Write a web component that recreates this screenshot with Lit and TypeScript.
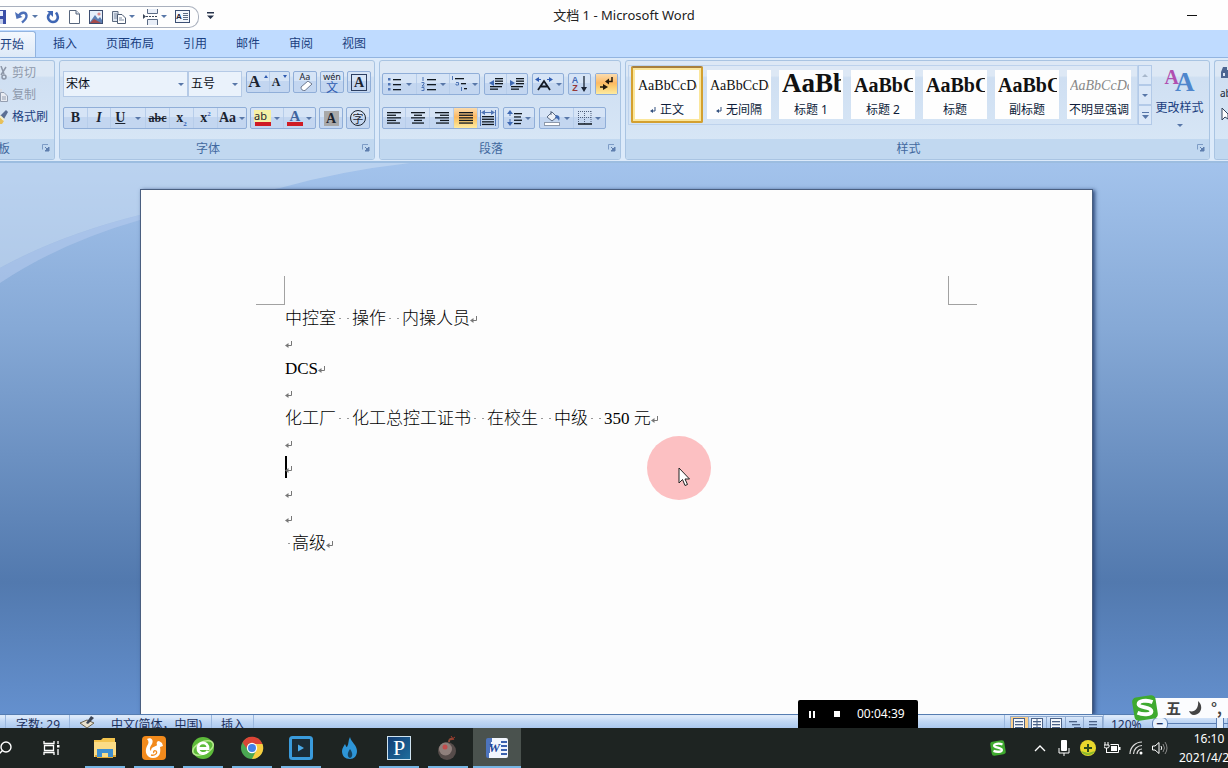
import { LitElement, html, css, svg, TemplateResult } from "lit";
import { customElement } from "lit/decorators.js";
import { classMap } from "lit/directives/class-map.js";

const pic = (w: number, h: number, body: unknown) =>
  html`<svg width=${w} height=${h} viewBox="0 0 ${w} ${h}" aria-hidden="true">${body}</svg>`;

const arrow = (c = "#5877a8") => pic(6, 3, svg`<path d="M0 0H6L3 3Z" fill=${c}/>`);

const rows = (list: number[][], c = "#101820") =>
  list.map(([x, y, w]) => svg`<rect x=${x} y=${y} width=${w} height="1.3" fill=${c}/>`);

const launcher = pic(8, 8, svg`<path d="M.5 5.500V.5H6" fill="none" stroke="#7d9cc6"/><path d="M3 3L6 6M7 3V7H3Z" stroke="#5f7fae" fill="#5f7fae"/>`);

const logoS = (s: number) => html`<svg width=${s} height=${s} viewBox="0 0 28 28" aria-hidden="true">
  <rect x="3" y="3" width="22" height="22" rx="4" fill="#3faa2f" transform="rotate(-9 14 14)"/>
  <path d="M21 8.500C15 6 8 7.500 8 10.500C8 14 20 13 20 17C20 20.500 12 20.500 7 18.500" fill="none" stroke="#fff" stroke-width="3.600"/></svg>`;

const icons: Record<string, TemplateResult> = {
  save: pic(7, 14, svg`<path d="M-7 0H6V14H-7Z" fill="#3a4fa8"/><path d="M-5 1H3V6H-5Z" fill="#e8eefc"/><path d="M-4 9H3V14H-4Z" fill="#c3cdea"/>`),
  undo: pic(14, 14, svg`<path d="M3.500 6C6 2 11 1.500 11.500 5.500C11.800 8 9.500 10.500 7 12.500" fill="none" stroke="#4c6fb8" stroke-width="2.400"/><path d="M0 2L1.500 9L7.500 7Z" fill="#4c6fb8"/>`),
  redo: pic(14, 14, svg`<path d="M4 3.500C0 7 3 12 7 12C11.500 12 13.500 7 10 2.500" fill="none" stroke="#3f66b4" stroke-width="2.600"/><path d="M1 1H7V7Z" fill="#3f66b4"/>`),
  page: pic(13, 14, svg`<path d="M1.500.5H8L11.500 4V13.500H1.500Z" fill="#fff" stroke="#56657c"/><path d="M8 .5V4H11.500" fill="#dde4ee" stroke="#56657c"/>`),
  picture: pic(15, 14, svg`<rect x=".5" y=".5" width="13" height="13" fill="#e6effa" stroke="#3c4d70"/><path d="M1 12L6 5L9 9L11 7L13 10V13H1Z" fill="#5d7fb4"/><path d="M1 13L5 9L12 13Z" fill="#a54a4a"/><circle cx="10" cy="4" r="1.600" fill="#d88"/>`),
  paste: pic(14, 14, svg`<path d="M.5 1.500H6V11.500H.5Z" fill="#dfe6f0" stroke="#5d6b80"/><path d="M2 4H5M2 6H5M2 8H5" stroke="#7c8aa0"/><path d="M5.500 4.500H10L13.500 8V13.500H5.500Z" fill="#fff" stroke="#4c5b72"/><path d="M7 8H10M7 10H12" stroke="#7c8aa0"/>`),
  breaks: pic(15, 16, svg`<path d="M4.500 0V4.500H14.500V0M4.500 16V10.500H14.500V16" fill="#e8eef8" stroke="#5b6b84"/><path d="M3 7.500H15" stroke="#3a4658" stroke-dasharray="2 1"/><path d="M0 5L3 7.500L0 10Z" fill="#3a4658"/>`),
  textbox: html`<span class="tb"><b>A</b><i></i></span>`,
  more: pic(7, 7, svg`<path d="M0 0H7V1.500H0ZM0 3.500H7L3.500 7Z" fill="#28344c"/>`),
  cut: pic(8, 14, svg`<path d="M1 0L4 8M6 1L1 9" stroke="#8d97a8" stroke-width="1.500"/><circle cx="4" cy="11" r="2" fill="none" stroke="#8d97a8" stroke-width="1.500"/>`),
  copy: pic(8, 14, svg`<path d="M0 1H2V10H0Z" fill="#d6dbe4"/><path d="M.5 4.500H4L7.500 8V13.500H.5Z" fill="#e9ecf2" stroke="#949eb0"/><path d="M2 9H6M2 11H6" stroke="#949eb0"/>`),
  brush: pic(8, 14, svg`<path d="M0 7L4 11L2 14H0Z" fill="#e8c15a"/><path d="M6 0L8 2L4 9L0 6Z" fill="#5b6f94"/><path d="M0 6L4 10" stroke="#f6efc8" stroke-width="2"/>`),
  eraser: html`<span class="stack"><span class="tiny">Aa</span>${pic(16, 10, svg`<path d="M4 6L11 0L15 3L8 9.500Q4 10 4 6Z" fill="#fff" stroke="#6e7a90"/>`)}</span>`,
  bullets: pic(16, 14, [svg`<path d="M1 1h2.500v2.500H1zM1 6h2.500v2.500H1zM1 11h2.500v2.500H1z" fill="#4f74b4"/>`, rows([[6, 2, 8], [6, 7, 8], [6, 12, 8]])]),
  numbers: pic(16, 14, [svg`<path d="M2 0V4M.5 5.500H3V7L1 9H3.500M.5 10.500H3V13.500H.5" stroke="#4f74b4" fill="none"/>`, rows([[6, 2, 9], [6, 7, 9], [6, 12, 9]])]),
  multi: pic(18, 16, [svg`<path d="M1.500 0V4M5 6.500H7.500V9H5V7.800M10.500 11V15" stroke="#4f74b4" fill="none"/>`, rows([[4, 2, 9], [10, 7, 5], [13, 12, 3]])]),
  outdent: pic(16, 12, [rows([[7, 0, 8], [7, 2.5, 8], [7, 5, 8], [2, 8, 12], [2, 10.5, 8]]), svg`<path d="M6 2V8L1 5Z" fill="#3e68b2"/>`]),
  indent: pic(16, 12, [rows([[7, 0, 8], [7, 2.5, 8], [7, 5, 8], [2, 8, 12], [2, 10.5, 8]]), svg`<path d="M1 2V8L6 5Z" fill="#3e68b2"/>`]),
  asian: pic(18, 14, svg`<path d="M3 13L9 4L15 13M6 9.500H12" stroke="#141a24" stroke-width="1.800" fill="none"/><path d="M0 2.500L4 0V5ZM18 2.500L14 0V5Z" fill="#2f5bb0"/><path d="M4 2.500H6M12 2.500H14" stroke="#2f5bb0"/>`),
  sort: html`<span class="az"><span class="azt"><b class="blue">A</b><b class="red">Z</b></span>${pic(6, 16, svg`<path d="M3 0V13" stroke="#1a2434" stroke-width="1.300"/><path d="M0 11H6L3 16Z" fill="#1a2434"/>`)}</span>`,
  marks: pic(16, 14, svg`<path d="M13 0V4.500H9" fill="none" stroke="#23180c" stroke-width="1.500"/><path d="M10 1.500V7.500L6 4.500Z" fill="#23180c"/><path d="M1 10H5" stroke="#23180c" stroke-width="1.500"/><path d="M4 7V13L9 10Z" fill="#23180c"/>`),
  left: pic(14, 12, rows([[0, 0, 14], [0, 2.6, 9], [0, 5.2, 14], [0, 7.8, 9], [0, 10.4, 13]])),
  center: pic(14, 12, rows([[0, 0, 14], [3, 2.6, 8], [0, 5.2, 14], [3, 7.8, 8], [1, 10.4, 12]])),
  right: pic(14, 12, rows([[0, 0, 14], [5, 2.6, 9], [0, 5.2, 14], [5, 7.8, 9], [1, 10.4, 13]])),
  justify: pic(14, 12, rows([[0, 0, 14], [0, 2.6, 14], [0, 5.2, 14], [0, 7.8, 14], [0, 10.4, 14]])),
  spread: pic(16, 16, [svg`<path d="M.5 0V16M15.500 0V16M3 2.500H13" stroke="#4f74b4"/><path d="M1 2.500L5 0V5ZM15 2.500L11 0V5Z" fill="#4f74b4"/>`, rows([[2, 6, 12], [2, 8.6, 12], [2, 11.2, 12], [2, 13.8, 12]])]),
  spacing: pic(15, 16, [svg`<path d="M3 2V14" stroke="#3e68b2" stroke-dasharray="4 3"/><path d="M0 4L3 0L6 4ZM0 12L3 16L6 12Z" fill="#3e68b2"/>`, rows([[7, 3, 8], [7, 6.3, 7], [7, 9.6, 8], [7, 12.9, 7]])]),
  bucket: pic(17, 16, svg`<path d="M3 7L8 2L13 7L8 11Z" fill="#eef2f8" stroke="#5b6b84"/><path d="M7 5V1" stroke="#5b6b84"/><path d="M12 5Q17 5 15 11Q14 8 11 8Z" fill="#4069b0"/><rect x=".5" y="12.500" width="15" height="3" fill="#fff" stroke="#8d99ab"/>`),
  borders: pic(14, 14, svg`<path d="M.5 0V13M6.500 0V13M13 0V13M0 .5H14M0 6.500H14" stroke="#50607c" stroke-dasharray="1 1"/><path d="M0 13H14" stroke="#101820" stroke-width="1.500"/>`),
  find: pic(8, 13, svg`<path d="M3 1H7V4H8V12H1V6Z" fill="#4d6692"/><path d="M3 7H5V10H3Z" fill="#dfe8f6"/>`),
  select: pic(8, 14, svg`<path d="M2 1V13L5 10L8 12V7Z" fill="#fff" stroke="#33435c"/>`),
};

const mark = html`<svg class="mark" width="8" height="8" viewBox="0 0 8 8" aria-hidden="true"><path d="M6.500 0V4.500H2" fill="none" stroke="#777"/><path d="M3.500 2V7L0 4.500Z" fill="#777"/></svg>`;
const gap = html`<span class="sp"><i></i><i></i></span>`;

interface Btn { name: string; icon: unknown; w: number; drop?: boolean; on?: boolean }

@customElement("tool-group")
export class ToolGroup extends LitElement {
  static properties = { items: { attribute: false } };
  declare items: Btn[];
  constructor() { super(); this.items = []; }
  static styles = css`
    :host { display: flex; flex: none; height: 22px; box-sizing: border-box; border: 1px solid #90aed8; border-radius: 2px;
      background: linear-gradient(#d6e4f6 0 45%, #c3d6f0 45% 100%); }
    button { display: flex; align-items: center; justify-content: center; gap: 3px; padding: 0; margin: 0; border: 0; box-sizing: border-box;
      background: none; font: bold 14px/14px "Liberation Serif", "Noto Sans CJK SC", serif; color: #1c2430; }
    button + button { border-left: 1px solid #b7cdea; }
    button.on { background: linear-gradient(#fbdcae, #fdb964 45%, #fbc96c 60%, #fdeaa0); }
    svg { display: block; flex: none; }
    .up { align-self: flex-start; margin-top: 3px; }
    .s { font-size: 12px; }
    .l { font-size: 17px; }
    .it { font-style: italic; }
    .un { text-decoration: underline; }
    .st { text-decoration: line-through; font-size: 12px; }
    small { font-size: 7px; line-height: 0; color: #2f5bb0; }
    .sub { vertical-align: sub; }
    .sup { vertical-align: super; }
    .stack { display: flex; flex-direction: column; align-items: center; }
    .tiny { font: 9px/8px "Noto Sans", sans-serif; }
    .wen { font: 12px/11px "Noto Sans CJK SC", sans-serif; color: #2f5bb0; }
    .bar { width: 16px; height: 4px; background: #cf1b24; }
    .ab { font: 11px/12px "Noto Sans", sans-serif; background: #f6f0a4; padding-right: 4px; }
    .fc { font-size: 15px; line-height: 12px; color: #40649f; }
    .box { border: 1px solid #2c3e60; width: 14px; height: 15px; line-height: 15px; }
    .shade { background: #a9a9a9; width: 15px; height: 15px; line-height: 15px; }
    .ring { border: 1px solid #1c2430; border-radius: 50%; width: 14px; height: 14px; font: 11px/14px "Noto Sans CJK SC", sans-serif; }
    .az { display: flex; gap: 3px; }
    .azt { display: flex; flex-direction: column; font: bold 9px/8px "Liberation Sans", sans-serif; }
    .blue { color: #3e68b2; }
    .red { color: #963838; }
  `;
  render() {
    return this.items.map((b) => html`<button type="button" aria-label=${b.name} class=${classMap({ on: !!b.on })} style="width:${b.w}px">
      ${b.icon}${b.drop ? arrow() : ""}</button>`);
  }
}

const fontGrow: Btn[] = [
  { name: "增大字体", w: 22, icon: html`<span class="l">A</span><span class="up">${pic(4, 3, svg`<path d="M0 3H4L2 0Z" fill="#2f5bb0"/>`)}</span>` },
  { name: "缩小字体", w: 20, icon: html`<span class="s">A</span><span class="up">${pic(4, 3, svg`<path d="M0 0H4L2 3Z" fill="#2f5bb0"/>`)}</span>` },
];
const clearFmt: Btn[] = [{ name: "清除格式", w: 22, icon: icons.eraser }];
const phonetic: Btn[] = [{ name: "拼音指南", w: 22, icon: html`<span class="stack"><span class="tiny">wén</span><span class="wen">文</span></span>` }];
const charBorder: Btn[] = [{ name: "字符边框", w: 22, icon: html`<span class="box">A</span>` }];
const fontStyle: Btn[] = [
  { name: "加粗", w: 23, icon: html`<span>B</span>` },
  { name: "倾斜", w: 23, icon: html`<span class="it">I</span>` },
  { name: "下划线", w: 35, drop: true, icon: html`<span class="un">U</span>&nbsp;` },
  { name: "删除线", w: 24, icon: html`<span class="st">abc</span>` },
  { name: "下标", w: 24, icon: html`<span>x<small class="sub">2</small></span>` },
  { name: "上标", w: 24, icon: html`<span>x<small class="sup">2</small></span>` },
  { name: "更改大小写", w: 29, drop: true, icon: html`<span>Aa</span>` },
];
const colours: Btn[] = [
  { name: "突出显示", w: 32, drop: true, icon: html`<span class="stack"><span class="ab">ab</span><span class="bar"></span></span>` },
  { name: "字体颜色", w: 32, drop: true, icon: html`<span class="stack"><span class="fc">A</span><span class="bar"></span></span>` },
];
const shading: Btn[] = [{ name: "字符底纹", w: 22, icon: html`<span class="shade">A</span>` }];
const enclose: Btn[] = [{ name: "带圈字符", w: 22, icon: html`<span class="ring">字</span>` }];
const lists: Btn[] = [
  { name: "项目符号", w: 33, drop: true, icon: icons.bullets },
  { name: "编号", w: 33, drop: true, icon: icons.numbers },
  { name: "多级列表", w: 30, drop: true, icon: icons.multi },
];
const indents: Btn[] = [{ name: "减少缩进量", w: 21, icon: icons.outdent }, { name: "增加缩进量", w: 21, icon: icons.indent }];
const asian: Btn[] = [{ name: "中文版式", w: 30, drop: true, icon: icons.asian }];
const sort: Btn[] = [{ name: "排序", w: 21, icon: icons.sort }];
const marks: Btn[] = [{ name: "显示编辑标记", w: 21, on: true, icon: icons.marks }];
const aligns: Btn[] = [
  { name: "左对齐", w: 22, icon: icons.left }, { name: "居中", w: 24, icon: icons.center },
  { name: "右对齐", w: 24, icon: icons.right }, { name: "两端对齐", w: 24, on: true, icon: icons.justify },
  { name: "分散对齐", w: 21, icon: icons.spread },
];
const spacing: Btn[] = [{ name: "行距", w: 30, drop: true, icon: icons.spacing }];
const fills: Btn[] = [{ name: "底纹", w: 33, drop: true, icon: icons.bucket }, { name: "边框", w: 32, drop: true, icon: icons.borders }];

const group = (items: Btn[]) => html`<tool-group .items=${items}></tool-group>`;

const styleList = [
  { label: "正文", sample: "AaBbCcDd", kind: "n", ret: true, on: true },
  { label: "无间隔", sample: "AaBbCcDd", kind: "n", ret: true },
  { label: "标题 1", sample: "AaBb", kind: "h1" },
  { label: "标题 2", sample: "AaBbC", kind: "h2" },
  { label: "标题", sample: "AaBbC", kind: "h2" },
  { label: "副标题", sample: "AaBbC", kind: "h2" },
  { label: "不明显强调", sample: "AaBbCcDd", kind: "em" },
];

const apps: { name: string; icon: TemplateResult; run: boolean; on?: boolean }[] = [
  { name: "文件资源管理器", run: true, icon: pic(24, 22, svg`<path d="M1 3H8L10 1H22V20H1Z" fill="#f3c44e"/><rect x="1" y="5" width="22" height="15" fill="#fbdc86"/><path d="M4 21V12H20V21H15V16H9V21Z" fill="#3f8fd0"/><path d="M2 18H4V21H20V18H23V20H2Z" fill="#e2a832"/>`) },
  { name: "UC浏览器", run: true, icon: pic(24, 24, svg`<rect width="24" height="24" rx="4" fill="#f28a1c"/><path d="M5 3C9 1 12 4 10 8C8 11 7 13 9 15C9 10 14 11 15 9C14 7 15 5 17 5L20 7L21 10L18 11C19 16 18 22 11 22C5 22 2 16 5 10C7 7 7 5 5 3Z" fill="#fff"/><path d="M9 19C13 20 16 17 14 15C12 14 11 16 12 17" fill="none" stroke="#f28a1c" stroke-width="1.300"/>`) },
  { name: "360浏览器", run: true, icon: pic(24, 24, svg`<circle cx="12" cy="12" r="11" fill="#5dbb3a"/><ellipse cx="12" cy="12" rx="11" ry="6" fill="none" stroke="#b6e88d" stroke-width="1.500" transform="rotate(-25 12 12)"/><path d="M6.500 12.500H17C17 5 7 5 7 12.500C7 18 14 19 17 15" fill="none" stroke="#fff" stroke-width="2.800"/>`) },
  { name: "Chrome", run: true, icon: pic(24, 24, svg`<circle cx="12" cy="12" r="11" fill="#4aa852"/><path d="M2.500 6.500A11 11 0 0 1 22.500 8H12Z" fill="#dc4436"/><path d="M2.500 6.500L8 14L12 8Z" fill="#dc4436"/><path d="M12 8H22.500A11 11 0 0 1 12 23L16.500 14Z" fill="#f8cd40"/><circle cx="12" cy="12" r="5.200" fill="#fff"/><circle cx="12" cy="12" r="4" fill="#4382e8"/>`) },
  { name: "播放器", run: true, icon: pic(24, 24, svg`<rect x="1.500" y="1.500" width="21" height="21" rx="2" fill="#1b2c36" stroke="#3a9bdc" stroke-width="3"/><path d="M9 8.500L15 12L9 15.500Z" fill="#4aa9e8"/>`) },
  { name: "火焰", run: false, icon: pic(18, 22, svg`<path d="M9 0C10 5 16 8 16 14C16 19 13 22 9 22C4 22 1 19 1 14C1 11 3 9 4 7C5 9 5 10 6 10C8 7 7 3 9 0Z" fill="#2e96d8"/><path d="M9 21C6 20 6 16 9 12C12 16 12 20 9 21Z" fill="#17425f"/>`) },
  { name: "P", run: true, icon: html`<span class="papp">P</span>` },
  { name: "炸弹", run: true, icon: pic(22, 24, svg`<circle cx="10" cy="15" r="9" fill="#564c4a"/><circle cx="8.500" cy="13" r="6.500" fill="#8f807c"/><circle cx="8" cy="11" r="2.500" fill="#c24d4d"/><path d="M12 6Q12 2 16 3" fill="none" stroke="#8c4a38" stroke-width="2"/><path d="M14 0L17 4M18 1L14 4" stroke="#a03a2c"/>`) },
  { name: "Word", run: true, on: true, icon: html`<span class="wapp"><b>W</b><i></i></span>` },
];

@customElement("app-root")
export class AppRoot extends LitElement {
  static styles = css`
    :host { display: flex; flex-direction: column; height: 100vh; position: relative; overflow: hidden; background: #bfdbff;
      font: 12px/16px "Noto Sans", "Noto Sans CJK SC", sans-serif; color: #1e3a70; }
    svg { display: block; flex: none; }
    button { font: inherit; color: inherit; border: 0; padding: 0; margin: 0; background: none; }
    header { display: grid; grid-template-columns: 1fr auto 1fr; align-items: center; height: 30px; background: #fefefe; flex: none; }
    .left { display: flex; align-items: center; gap: 8px; }
    .qat { display: flex; align-items: center; gap: 8px; height: 20px; margin-top: 3px; padding-right: 8px; border: 1px solid #a9b0bd; border-left: 0; border-radius: 0 10px 10px 0; }
    .qat button { display: flex; align-items: center; gap: 3px; }
    .tb { display: flex; align-items: center; width: 13px; height: 11px; border: 1px solid #3c5074; background: #f2f6fc; }
    .tb b { font: bold 8px/10px "Liberation Sans", sans-serif; color: #223; }
    .tb i { flex: 1; height: 7px; margin: 0 1px; background: repeating-linear-gradient(#5b6b84 0 1px, transparent 1px 2px); }
    h1 { margin: 0; padding: 0 0 0 20px; font: inherit; font-size: 13px; color: #222; }
    .min { justify-self: end; width: 10px; height: 1px; background: #111; margin-right: 31px; }
    nav { display: flex; gap: 5px; height: 26px; padding-top: 1px; flex: none; border-bottom: 1px solid #92b4e0; }
    nav a { padding: 0 12px; line-height: 25px; color: #1b3f80; text-decoration: none; }
    nav a.on { padding-left: 0; background: linear-gradient(#f3f8fe, #dde9f7); border: 1px solid #92b4e0; border-width: 1px 1px 0 0; border-radius: 0 3px 0 0; height: 26px; box-sizing: border-box; padding-right: 11px; }
    .ribbon { display: flex; gap: 4px; height: 105px; padding: 2px 0 1px; box-sizing: border-box; flex: none; background: #dceafa; border-bottom: 2px solid #9cbde0; }
    .g { display: flex; flex-direction: column; box-sizing: border-box; border: 1px solid #a9c4e2; border-radius: 3px; flex: none; overflow: hidden; background: linear-gradient(#dde8f5 0 15%, #cfdff2 17%, #d9e8f7 100%); }
    .g.clip { width: 55px; border-left: 0; border-radius: 0 3px 3px 0; }
    .g.font { width: 316px; }
    .g.para { width: 242px; }
    .g.styles { flex: 1; min-width: 0; }
    .g.edit { width: 14px; border-right: 0; border-radius: 3px 0 0 3px; }
    .body { flex: 1; padding: 0 3px; }
    .foot { display: flex; align-items: center; height: 20px; background: #c1d8f0; color: #42699f; padding-right: 4px; }
    .foot button { margin: 0 0 2px 6px; }
    .foot span { flex: 1; text-align: center; }
    .foot.cut { justify-content: space-between; }
    .foot.cut span { flex: none; width: 10px; display: flex; justify-content: flex-end; overflow: hidden; white-space: nowrap; }
    .clip .body { display: flex; flex-direction: column; padding: 1px 0 0; }
    .clip .body button { display: flex; align-items: center; gap: 4px; height: 22px; color: #1b3f80; white-space: nowrap; }
    .clip .body button[disabled] { color: #8e99ab; }
    .row { display: flex; align-items: flex-start; gap: 3px; }
    .font .body { padding-top: 10px; }
    .font .row + .row { margin-top: 10px; }
    .para .body { padding: 12px 2px 0; }
    .para .row + .row { margin-top: 12px; }
    .para .row { gap: 4px; }
    .combos { display: flex; margin-right: 1px; }
    .combo { position: relative; }
    .combo svg { position: absolute; right: 4px; top: 12px; pointer-events: none; }
    select { display: block; appearance: none; box-sizing: border-box; height: 26px; padding: 0 2px; border: 1px solid #b5cae6; border-radius: 0; background: #eaf2fb; font: inherit; font-size: 12px; color: #0a0f18; }
    .name select { width: 125px; }
    .size select { width: 54px; }
    .sbody { display: flex; flex: 1; padding: 4px 2px 0; min-width: 0; }
    .gal { display: flex; height: 60px; box-sizing: border-box; border: 1px solid #bdd2ec; padding: 0 2px; overflow: hidden; }
    .cell { width: 72px; height: 56px; flex: none; display: flex; padding: 4px; box-sizing: border-box; }
    .cell .in { flex: 1; min-width: 0; height: 49px; background: #fefefe; overflow: hidden; color: #0d1c3a; display: flex; flex-direction: column; }
    .cell.on { padding: 2px; border: 2px solid #d3a030; border-top-color: #a87f3c; border-radius: 2px; background: #fbe69a; height: 57px; }
    .cell.on .in { height: auto; }
    .smp { height: 32px; margin-left: 3px; overflow: hidden; white-space: nowrap; text-align: left; font: 14px/32px "Liberation Serif", serif; color: #111; width: 59px; }
    .smp.h1 { font-weight: bold; font-size: 27px; line-height: 26px; }
    .smp.h2 { font-weight: bold; font-size: 20px; line-height: 30px; }
    .smp.em { font-style: italic; color: #888; }
    .lab { display: flex; justify-content: center; align-items: center; gap: 4px; white-space: nowrap; line-height: 16px; }
    .scroll { display: flex; flex-direction: column; width: 14px; flex: none; }
    .scroll button { height: 20px; display: grid; place-items: center; border: 1px solid #b3cae8; background: #dbe8f8; }
    .change { flex: 1; display: flex; flex-direction: column; align-items: center; color: #1b3f80; white-space: nowrap; }
    .aa { display: flex; align-items: flex-start; height: 32px; font: bold 20px/24px "Liberation Serif", serif; color: #b04fb0; margin-bottom: 3px; }
    .aa b { font-size: 27px; line-height: 34px; color: #4f86cc; margin-left: -4px; }
    .change svg { margin-top: 8px; }
    .edit .body { display: flex; flex-direction: column; gap: 8px; padding: 5px 0 0 5px; }
    .edit small { font: 10px/12px "Noto Sans", sans-serif; color: #1a2434; }
    main { position: relative; flex: 1; min-height: 0; overflow: hidden; display: flex; background: linear-gradient(#a3c3ec, #86a9d6 30%, #5279ae 76%, #6490ce); }
    .swoosh { position: absolute; left: 0; top: 0; }
    article { position: relative; flex: 1; margin: 26px 135px 0 140px; background: #fdfdfd; border: 1px solid #4a5f80; border-bottom: 0; padding-top: 86px; box-shadow: 2px 1px 4px #2c4778; color: #000; }
    .crops { display: flex; justify-content: space-between; margin: 0 115px; }
    .crops i { width: 28px; height: 28px; border: solid #a2a2a2; border-width: 0 1px 1px 0; }
    .crops i + i { border-width: 0 0 1px 1px; }
    .doc { padding: 1px 0 0 144px; font: 300 17px/25px "Liberation Serif", "Noto Sans CJK SC", serif; }
    .doc p { display: flex; align-items: center; height: 25px; margin: 0; white-space: pre; }
    .doc .mark { margin: 2px 0 0; }
    .sp { display: flex; width: 16px; justify-content: space-around; }
    .sp i { width: 2px; height: 1px; background: #999; }
    .sp.one { width: 7px; }
    .caret { width: 2px; height: 22px; background: #000; margin: 0 -2px 4px 0; }
    .halo { position: absolute; left: 647px; top: 436px; width: 64px; height: 64px; border-radius: 50%; background: #fcc0c2; display: grid; place-items: center; }
    .halo svg { margin: 18px 0 0 10px; }
    .status { display: flex; height: 14px; flex: none; overflow: hidden; background: linear-gradient(#dce9fa 0 15%, #c3d9f5 45%, #abc8ee); border-top: 1px solid #567db1; box-sizing: border-box; color: #1b2f5c; }
    .status > * { height: 22px; line-height: 19px; box-sizing: border-box; white-space: nowrap; border-right: 1px solid #9ab7de; display: flex; flex: none; }
    .s0 { width: 6px; }
    .s1 { width: 64px; padding-left: 10px; }
    .s2 { width: 142px; padding-left: 9px; gap: 16px; }
    .s3 { width: 42px; padding-left: 9px; }
    .status > .s4 { flex: 1; }
    .views { width: 99px; padding: 1px 0 0 5px; }
    .views button { width: 19px; height: 18px; box-sizing: border-box; border: 1px solid #8faad0; border-left-width: 0; display: grid; place-items: center; }
    .views button:first-child { background: #fbd08c; border-left-width: 1px; }
    .zoom { width: 124px; padding-left: 7px; align-items: flex-start; }
    .zoom span { flex: none; width: 41px; }
    .zoom button { flex: none; width: 16px; height: 14px; box-sizing: border-box; margin-top: 2px; border: 1px solid #5b7fb4; border-radius: 6px; line-height: 10px; background: #e8f1fc; font-weight: bold; }
    .zoom input { flex: none; width: 104px; margin: 2px 0 0; height: 14px; appearance: none; background: linear-gradient(transparent 6px, #5b7fb4 6px 7px, transparent 7px); }
    .zoom input::-webkit-slider-thumb { appearance: none; width: 8px; height: 14px; border: 1px solid #5b7fb4; background: #e8f1fc; border-radius: 1px 1px 3px 3px; }
    footer { display: flex; align-items: stretch; height: 40px; flex: none; background: #1e2422; color: #fff; overflow: hidden; }
    footer button, .tray { display: flex; align-items: center; justify-content: center; }
    .search { width: 27px; justify-content: flex-start; }
    .view { width: 48px; margin-right: 6px; }
    .apps { display: flex; gap: 1px; }
    .app { width: 48px; position: relative; }
    .app.run::after { content: ""; position: absolute; left: 4px; right: 4px; bottom: 0; height: 2px; background: #76b5e4; }
    .app.on { background: #4a524e; }
    .app.on::after { left: 0; right: 0; }
    .papp { width: 22px; height: 22px; border: 1px solid #cfe3f0; background: linear-gradient(135deg, #123c74, #1f6d9c); font: 22px/22px "Liberation Serif", serif; color: #fff; }
    .wapp { display: flex; width: 22px; height: 20px; background: linear-gradient(100deg, #4d74bd 0 24%, #f2f6fd 24%); border-radius: 2px; align-items: center; justify-content: flex-end; gap: 1px; }
    .wapp b { font: italic bold 13px/18px "Liberation Serif", serif; color: #23479a; }
    .wapp i { width: 6px; height: 14px; margin-right: 1px; background: repeating-linear-gradient(#3b62ae 0 2px, transparent 2px 4px); }
    .tray { margin-left: auto; }
    .ico { display: grid; place-items: center; width: 24px; height: 24px; }
    .ime { margin-right: 18px; }
    .clock { width: 60px; margin: 0 -11px 0 7px; text-align: center; line-height: 19px; flex: none; }
    .clock div + div { text-align: left; }
    .rec { position: absolute; left: 798px; bottom: 40px; width: 120px; height: 28px; box-sizing: border-box; padding-left: 9px; display: flex; align-items: center; background: #000; color: #fff; border-radius: 2px 2px 0 0; }
    .rec button { width: 10px; height: 12px; margin-right: 15px; display: grid; place-items: center; }
    .imebar { position: absolute; right: 0; bottom: 45px; height: 30px; width: 98px; display: flex; align-items: center; color: #444; }
    .imebar .strip { flex: 1; display: flex; align-items: center; gap: 8px; height: 20px; margin-left: -6px; padding-left: 12px; background: #fbfcfe; font: bold 15px/20px "Noto Sans CJK SC", sans-serif; white-space: nowrap; overflow: hidden; }
    .imebar > svg { position: relative; }
  `;

  private foot(t: string, cut = false) {
    return html`<div class=${classMap({ foot: true, cut })}><span>${t}</span><button type="button" aria-label=${t}>${launcher}</button></div>`;
  }

  render() {
    return html`
      <header>
        <div class="left">
          <div class="qat">
            <button aria-label="保存">${icons.save}</button>
            <button aria-label="撤消">${icons.undo}${arrow()}</button>
            <button aria-label="恢复">${icons.redo}</button>
            <button aria-label="新建">${icons.page}</button>
            <button aria-label="图片">${icons.picture}</button>
            <button aria-label="粘贴">${icons.paste}${arrow()}</button>
            <button aria-label="分隔符">${icons.breaks}${arrow()}</button>
            <button aria-label="文本框">${icons.textbox}</button>
          </div>
          <button aria-label="自定义">${icons.more}</button>
        </div>
        <h1>文档 1 - Microsoft Word</h1>
        <button class="min" aria-label="最小化"></button>
      </header>
      <nav>
        ${["开始", "插入", "页面布局", "引用", "邮件", "审阅", "视图"].map((t, i) => html`<a href="#" class=${classMap({ on: i === 0 })}>${t}</a>`)}
      </nav>
      <section class="ribbon">
        <div class="g clip">
          <div class="body">
            <button disabled>${icons.cut}剪切</button>
            <button disabled>${icons.copy}复制</button>
            <button>${icons.brush}格式刷</button>
          </div>
          ${this.foot("剪贴板", true)}
        </div>
        <div class="g font">
          <div class="body">
            <div class="row">
              <div class="combos">
                <label class="combo name"><select aria-label="字体"><option>宋体</option></select>${arrow()}</label>
                <label class="combo size"><select aria-label="字号"><option>五号</option></select>${arrow()}</label>
              </div>
              ${group(fontGrow)}${group(clearFmt)}${group(phonetic)}${group(charBorder)}
            </div>
            <div class="row">${group(fontStyle)}${group(colours)}${group(shading)}${group(enclose)}</div>
          </div>
          ${this.foot("字体")}
        </div>
        <div class="g para">
          <div class="body">
            <div class="row">${group(lists)}${group(indents)}${group(asian)}${group(sort)}${group(marks)}</div>
            <div class="row">${group(aligns)}${group(spacing)}${group(fills)}</div>
          </div>
          ${this.foot("段落")}
        </div>
        <div class="g styles">
          <div class="sbody">
            <div class="gal">
              ${styleList.map((s) => html`<button class=${classMap({ cell: true, on: !!s.on })}>
                <span class="in"><span class="smp ${s.kind}">${s.sample}</span><span class="lab">${s.ret ? pic(6, 7, svg`<path d="M5 0V4H2" fill="none" stroke="#33507e"/><path d="M3 2V6L0 4Z" fill="#33507e"/>`) : ""}${s.label}</span></span></button>`)}
            </div>
            <div class="scroll">
              <button aria-label="上一行">${pic(6, 3, svg`<path d="M0 3H6L3 0Z" fill="#a8b8cc"/>`)}</button>
              <button aria-label="下一行">${arrow()}</button>
              <button aria-label="其他">${pic(7, 7, svg`<path d="M0 0H7V1H0ZM0 3H7L3.500 7Z" fill="#5877a8"/>`)}</button>
            </div>
            <button class="change"><span class="aa">A<b>A</b></span><span>更改样式</span>${arrow()}</button>
          </div>
          ${this.foot("样式")}
        </div>
        <div class="g edit">
          <div class="body">${icons.find}<small>ab</small>${icons.select}</div>
          <div class="foot"></div>
        </div>
      </section>
      <main>
        <svg class="swoosh" width="420" height="130" viewBox="0 0 420 130" aria-hidden="true">
          <path d="M0 0H410Q340 8 280 25L140 52Q60 72 0 105Z" fill="#d2e2f4" opacity=".5"/>
          <path d="M0 105Q60 72 140 52V57Q60 80 0 120Z" fill="#b9cdf0" opacity=".5"/>
        </svg>
        <article>
          <div class="crops"><i></i><i></i></div>
          <div class="doc">
            <p>中控室${gap}操作${gap}内操人员${mark}</p>
            <p>${mark}</p>
            <p>DCS${mark}</p>
            <p>${mark}</p>
            <p>化工厂${gap}化工总控工证书${gap}在校生${gap}中级${gap}350 元${mark}</p>
            <p>${mark}</p>
            <p><span class="caret"></span>${mark}</p>
            <p>${mark}</p>
            <p>${mark}</p>
            <p><span class="sp one"><i></i></span>高级${mark}</p>
          </div>
        </article>
      </main>
      <section class="status">
        <span class="s0"></span>
        <span class="s1">字数: 29</span>
        <span class="s2">${pic(16, 16, svg`<path d="M1 8L8 5L15 8L8 13Z" fill="#e8e0cc" stroke="#6a6250"/><path d="M7 8L12 1L15 3L9 9Z" fill="#3c4454"/>`)}<span>中文(简体，中国)</span></span>
        <span class="s3">插入</span>
        <span class="s4"></span>
        <span class="views">
          ${["页面视图", "阅读版式", "Web 版式", "大纲", "草稿"].map((n, i) => html`<button aria-label=${n}>${pic(12, 14, [
            i < 3 ? svg`<rect x=".5" y=".5" width="11" height="13" fill="#f6f9fd" stroke="#4b6288"/>` : "",
            rows([[i === 3 ? 0 : 2, 3, 8], [i === 3 ? 3 : 2, 6, 8], [i === 3 ? 5 : 2, 9, i === 3 ? 7 : 8]], "#4b6288"),
            i === 1 ? svg`<path d="M6 0V14" stroke="#4b6288"/>` : ""])}</button>`)}
        </span>
        <span class="zoom"><span>120%</span><button aria-label="缩小">−</button><input type="range" aria-label="显示比例" min="10" max="190" value="100" /></span>
      </section>
      <footer>
        <button class="search" aria-label="搜索">${pic(13, 16, svg`<circle cx="6" cy="7" r="5" fill="none" stroke="#fff" stroke-width="1.400"/><path d="M2.500 10.500L-2 15" stroke="#fff" stroke-width="1.400"/>`)}</button>
        <button class="view" aria-label="任务视图">${pic(17, 16, svg`<path d="M1 1V3.500H11V1M1 15V12.500H11V15M1.500 5.500H10.500V10.500H1.500ZM15 1V4M15 9V15" fill="none" stroke="#fff" stroke-width="1.300"/><rect x="14" y="5" width="2.500" height="2.500" fill="#fff"/>`)}</button>
        <div class="apps">${apps.map((a) => html`<button aria-label=${a.name} class=${classMap({ app: true, run: a.run, on: !!a.on })}>${a.icon}</button>`)}</div>
        <div class="tray">
          <span class="ico ime">${logoS(18)}</span>
          <span class="ico">${pic(12, 7, svg`<path d="M1 6L6 1L11 6" fill="none" stroke="#fff" stroke-width="1.300"/>`)}</span>
          <span class="ico">${pic(12, 16, svg`<rect x="3" y="0" width="6" height="11" rx="1" fill="#fff"/><path d="M1 8V13H11V8M6 13V16" fill="none" stroke="#fff"/>`)}</span>
          <span class="ico">${pic(16, 16, svg`<circle cx="8" cy="8" r="8" fill="#e9d82c"/><path d="M1 11A8 8 0 0 0 15 11L8 13Z" fill="#8bb92c"/><path d="M8 4V12M4 8H12" stroke="#2c4a1c" stroke-width="2"/>`)}</span>
          <span class="ico">${pic(17, 12, svg`<path d="M1 0V3M4 0V3M0 3H5V5Q5 6 2.500 6Q0 6 0 5ZM2.500 6V11" fill="none" stroke="#fff"/><path d="M6.500 2.500H14.500V10.500H2.500" fill="none" stroke="#fff"/><rect x="7" y="4" width="6" height="5" fill="#fff"/><rect x="15" y="5" width="1.500" height="3" fill="#fff"/>`)}</span>
          <span class="ico">${pic(14, 14, svg`<path d="M1 13A12 12 0 0 1 13 1M4.500 13A8.500 8.500 0 0 1 13 4.500M8 13A5 5 0 0 1 13 8" fill="none" stroke="#ddd" stroke-width="1.200"/><circle cx="12" cy="12" r="1.500" fill="#fff"/>`)}</span>
          <span class="ico">${pic(16, 14, svg`<path d="M.5 5H3L7 1.500V12.500L3 9H.5Z" fill="none" stroke="#fff"/><path d="M9 5Q10.500 7 9 9" fill="none" stroke="#fff"/><path d="M11 3Q14 7 11 11M13 1Q17 7 13 13" fill="none" stroke="#888"/>`)}</span>
          <div class="clock"><div>16:10</div><div>2021/4/2</div></div>
        </div>
      </footer>
      <div class="rec">
        <button aria-label="暂停">${pic(6, 7, svg`<path d="M0 0H2V7H0ZM4 0H6V7H4Z" fill="#fff"/>`)}</button>
        <button aria-label="停止">${pic(6, 6, svg`<rect width="6" height="6" fill="#fff"/>`)}</button>
        <time>00:04:39</time>
      </div>
      <div class="imebar">${logoS(30)}<div class="strip"><span>五</span>${pic(14, 14, svg`<path d="M9 0C15 5 12 14 5 14C2 14 1 12 0 10C6 12 10 7 9 0Z" fill="#444"/>`)}<span>°,</span></div></div>
      <div class="halo">${pic(12, 20, svg`<path d="M1 1V16L4.500 12.500L7 18.500L9.500 17.500L7 12H11.500Z" fill="#fff" stroke="#222"/>`)}</div>
    `;
  }
}
